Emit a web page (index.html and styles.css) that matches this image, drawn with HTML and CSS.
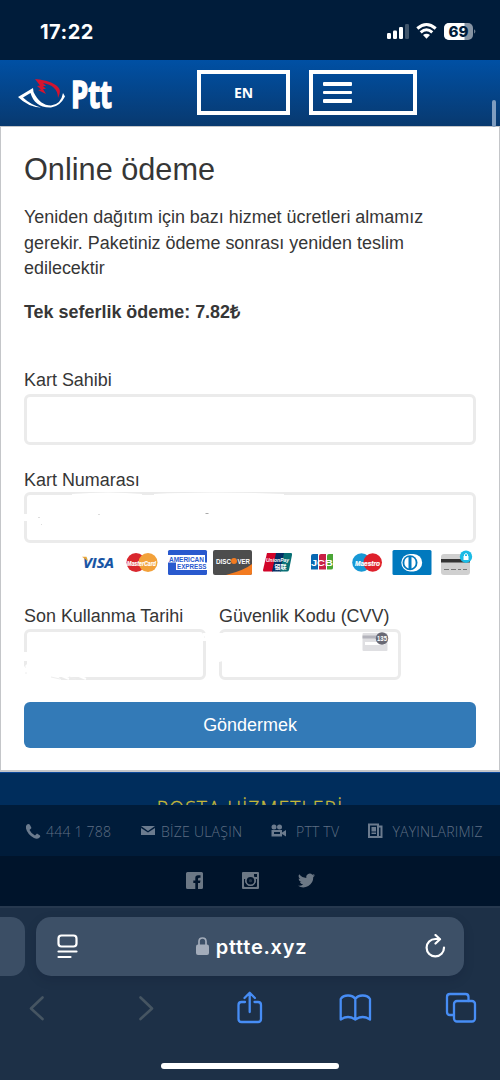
FILE: index.html
```html
<!DOCTYPE html>
<html lang="tr">
<head>
<meta charset="utf-8">
<title>Online ödeme</title>
<link rel="stylesheet" href="styles.css">
</head>
<body>
<div class="phone">
  <div class="status">
    <span class="clock">17:22</span>
    <svg class="status-icons" width="92" height="20" viewBox="0 0 92 20">
      <g fill="#fff"><rect x="0" y="11" width="4" height="6" rx="1.2"/><rect x="6" y="8.500" width="4" height="8.500" rx="1.200"/><rect x="12" y="5" width="4" height="12" rx="1.200"/><rect x="18" y="2" width="4" height="15" rx="1.200" opacity=".25"/></g>
      <g fill="none" stroke="#fff" stroke-width="3"><path d="M30.300 6.500Q39.500-1.500 48.700 6.500"/><path d="M33.700 10.300Q39.500 5.300 45.300 10.300"/></g>
      <path fill="#fff" d="M36 13Q39.500 10.300 43 13L39.500 16.700Z"/>
      <rect x="57" y="1" width="29" height="17" rx="5" fill="#8794a3"/>
      <path d="M62 1h15.500v17H62a5 5 0 0 1-5-5V6a5 5 0 0 1 5-5Z" fill="#fff"/>
      <path d="M87.200 7.300q2.300 2.200 0 4.500Z" fill="#8794a3"/>
      <text x="61.500" y="15" class="battery" textLength="20" lengthAdjust="spacingAndGlyphs">69</text>
    </svg>
  </div>

  <div class="header">
    <svg class="logo" width="98" height="36" viewBox="0 0 98 36">
      <path fill="#fff" d="M0 18 15 9 15.500 13Q22 26.500 33 26.500Q43 25.500 45 14L47 17.500Q42 27.500 33 28.500C22 29 15 23 12.500 14L5 18.500Q13 26 23 28.500Q10 28 0 18Z"/>
      <path fill="#d5142f" d="M17 0C29 1 45 6 41.500 15L40 19C40 10 34 5.500 25 4L28 7 25 7 28 10 25 10 28 15 20 11 23 10.500 19 7 22 6.500Z"/>
      <text x="53" y="29" class="logo-text" textLength="41" lengthAdjust="spacingAndGlyphs">Ptt</text>
    </svg>
    <div class="lang">EN</div>
    <div class="menu"><i></i><i></i><i></i></div>
    <div class="scrollbar"></div>
  </div>

  <div class="main">
    <h1>Online ödeme</h1>
    <p class="intro">Yeniden dağıtım için bazı hizmet ücretleri almamız<br>gerekir. Paketiniz ödeme sonrası yeniden teslim<br>edilecektir</p>
    <p class="price">Tek seferlik ödeme: 7.82₺</p>
    <div class="group">
      <div class="label">Kart Sahibi</div>
      <div class="box"></div>
    </div>
    <div class="group number">
      <div class="label">Kart Numarası</div>
      <div class="box">
        <svg class="smudge" width="300" height="51" viewBox="0 0 300 51"><path fill="#fff" d="M0 22h5v7H0zM48 2Q85-1 118 2V4H48zM130 2Q185-1 260 2V4H130z"/><path stroke="#aaa" d="M181.500 21.500h3"/><path stroke="#ddd" d="M14 25.500h2M74 22.500h2M17 32.500h1"/></svg>
      </div>
    </div>
    <svg class="brands" width="391" height="27" viewBox="0 0 391 27">
      <text x="1" y="19" class="visa" textLength="31" lengthAdjust="spacingAndGlyphs">VISA</text>
      <path fill="#e9a63a" d="M0 7.700h4.500l1.500 4.500z"/>
      <circle cx="54" cy="13.500" r="9.500" fill="#d9272e"/><circle cx="66" cy="13.500" r="9.500" fill="#f2a13a"/>
      <text x="45" y="16.500" class="mc" textLength="29" lengthAdjust="spacingAndGlyphs">MasterCard</text>
      <rect x="86" y="1" width="39" height="25" rx="1.500" fill="#2959ce"/>
      <path fill="#fff" d="M86 6h37v7.500h2v7.500H94v-7.500h-8z"/>
      <text x="87" y="12.500" class="amex" textLength="35" lengthAdjust="spacingAndGlyphs">AMERICAN</text>
      <text x="95" y="20" class="amex" textLength="29.500" lengthAdjust="spacingAndGlyphs">EXPRESS</text>
      <rect x="131" y="1" width="39" height="25" rx="2" fill="#4d4d4d"/><path fill="#f37b20" d="M144 26Q163 21 170 15V24a2 2 0 0 1-2 2Z"/>
      <text x="134" y="14.500" class="disc" textLength="15" lengthAdjust="spacingAndGlyphs">DISC</text><circle cx="152" cy="12" r="3" fill="#f37b20"/><text x="155.500" y="14.500" class="disc" textLength="12.500" lengthAdjust="spacingAndGlyphs">VER</text>
      <path fill="#d10429" d="M185 4h10l-4 18.500h-9q-1 0-1-1.500Z"/><path fill="#022e64" d="M194 4h9l-4 18.500h-9Z"/><path fill="#076f74" d="M202 4h7q1.500 0 1 2l-3 15q-.5 1.500-2 1.500h-7Z"/>
      <text x="184" y="13" class="up" textLength="23" lengthAdjust="spacingAndGlyphs">UnionPay</text><text x="192.500" y="20" class="up-cn" textLength="12" lengthAdjust="spacingAndGlyphs">银联</text>
      <path fill="#0868b2" d="M231 5h5v15.500h-7V7q0-2 2-2Z"/><path fill="#c92046" d="M239 5h5v15.500h-7V7q0-2 2-2Z"/><path fill="#4aa536" d="M247 5h4v14q0 1.500-2 1.500h-4V7q0-2 2-2Z"/>
      <text x="229" y="16.500" class="jcb" textLength="22" lengthAdjust="spacingAndGlyphs">JCB</text>
      <circle cx="279.500" cy="13.500" r="9.300" fill="#1798d5"/><circle cx="290.700" cy="13.500" r="9.300" fill="#de202b"/>
      <text x="273" y="16.500" class="mc" textLength="25" lengthAdjust="spacingAndGlyphs">Maestro</text>
      <rect x="310.500" y="1" width="39" height="25" rx="1.500" fill="#0079be"/><path fill="#fff" d="M328 5h3.500a8.700 8.700 0 0 1 0 17.400H328a8.700 8.700 0 0 1 0-17.400Z"/><circle cx="328" cy="13.700" r="7.500" fill="#0079be"/><path fill="#fff" d="M326.500 8a6 6 0 0 0 0 11.400Zm3 0a6 6 0 0 1 0 11.400Z"/>
      <rect x="359" y="5" width="29" height="21" rx="3" fill="#d0d0d0"/><path fill="#333" d="M359 10h29v3.500h-29z"/><path stroke="#777" d="M362 20.500h5m2 0h5m2 0h3m2 0h4"/>
      <circle cx="384" cy="7.700" r="6.200" fill="#1cbbe5"/><path fill="#fff" d="M381.500 7h5v4h-5z"/><path fill="none" stroke="#fff" d="M382.500 7.500V5.500q1.500-2 3 0v2"/>
    </svg>
    <div class="pair">
      <div class="group expiry">
        <div class="label">Son Kullanma Tarihi</div>
        <div class="box"><svg class="smudge" width="182" height="51" viewBox="0 0 182 51"><path fill="#fff" d="M0 23h5v9H0zM0 38l4-4v17H0zM4 47h30l4 5H4zM179 4h3v8h-3z"/><path fill="none" stroke="#eee" d="M1 38h1M1 44h2M27 48l9 2M45 48l7 2M180 8h1"/><path stroke="#fff" stroke-width="2" d="M38 47l7 3M55 47l7 3"/></svg></div>
      </div>
      <div class="group cvv">
        <div class="label">Güvenlik Kodu (CVV)</div>
        <div class="box">
          <svg class="smudge" width="182" height="51" viewBox="0 0 182 51"><path fill="#fff" d="M0 4h4v28l-4 1z"/><rect x="143.500" y="4" width="25" height="18" rx="1" fill="#dfdfe2"/><path fill="#b3b3bb" d="M143.500 6.500h25v3h-25z"/><path fill="#fff" d="M146 13h20v3h-20z"/><circle cx="163" cy="9.500" r="6.200" fill="#696974"/><text x="158" y="12" class="digits" textLength="10" lengthAdjust="spacingAndGlyphs">135</text></svg>
        </div>
      </div>
    </div>
    <div class="submit">Göndermek</div>
  </div>

  <div class="services"><span>POSTA HİZMETLERİ</span></div>
  <div class="links">
    <svg width="500" height="51" viewBox="0 0 500 51">
      <g fill="#6b7b8e">
        <path d="M27 19.500q2-1 3 .5l1.500 3-2 2q2 4 5.500 5.500l2-2 3 2q1 1-1 2.500-2 1.500-5 0-6.500-3.500-8-9.500-.5-3 1-4Z"/>
        <path d="M141 21h14l-7 5ZM141 23l7 4.500 7-4.500v7h-14Z"/>
        <circle cx="274" cy="22" r="2.500"/><circle cx="279.500" cy="22" r="2.500"/><path fill-rule="evenodd" d="M271.500 25h10.500v2.500l4-2.500v6.500l-4-2.500v2.500h-10.500ZM274 27v2h6v-2Z"/>
        <path fill-rule="evenodd" d="M368 18.500h11v2h3.500v12.500H368ZM370 20.500v10.500h7v-10.500ZM379 22.500v8.500h1.500v-8.500Z"/><path d="M371.500 22h4.500v4.500h-4.500ZM371.500 27.500h4.500v1.500h-4.500Z"/>
      </g>
      <g class="link-text">
        <text x="46" y="32" textLength="65">444 1 788</text>
        <text x="161" y="32" textLength="81">BİZE ULAŞIN</text>
        <text x="296" y="32" textLength="43">PTT TV</text>
        <text x="392.500" y="32" textLength="90">YAYINLARIMIZ</text>
      </g>
    </svg>
  </div>
  <div class="social">
    <svg width="17" height="17" viewBox="0 0 17 17"><path fill="#6c7885" fill-rule="evenodd" d="M1.500 0h14Q17 0 17 1.500v14q0 1.500-1.500 1.500H12v-6h2l.5-2.500H12V7q0-1.300 1.300-1.300h1.200V3.200H12Q9.300 3.200 9.300 6v2.500h-2V11h2v6H1.500Q0 17 0 15.500v-14Q0 0 1.500 0Z"/></svg>
    <svg width="17" height="17" viewBox="0 0 17 17"><path fill="#6c7885" fill-rule="evenodd" d="M1 0h15q1 0 1 1v15q0 1-1 1H1q-1 0-1-1V1q0-1 1-1ZM2 7v7q0 1 1 1h11q1 0 1-1V7h-1.500a5.300 5.300 0 1 1-10 0ZM12 2v3h3V2Z"/><path fill="#6c7885" d="M3.500 7 5 4h7l1.500 3a5.300 5.300 0 1 1-10 0Z"/><circle cx="8.500" cy="8.700" r="3.800" fill="#00142b"/><circle cx="8.500" cy="8.700" r="1.600" fill="#6c7885" opacity=".35"/></svg>
    <svg width="17" height="17" viewBox="0 0 24 24"><path fill="#6c7885" d="M24 4.600a10 10 0 0 1-2.800.8 5 5 0 0 0 2.100-2.700 10 10 0 0 1-3.100 1.200 4.900 4.900 0 0 0-8.400 4.500A14 14 0 0 1 1.700 3.200a4.900 4.900 0 0 0 1.500 6.500A5 5 0 0 1 1 9.100a4.900 4.900 0 0 0 3.900 4.900 5 5 0 0 1-2.200.1 4.900 4.900 0 0 0 4.600 3.400A10 10 0 0 1 0 19.500 14 14 0 0 0 21.500 7.100 10 10 0 0 0 24 4.600Z"/></svg>
  </div>

  <div class="browser">
    <div class="tabs">
      <div class="tab-edge"></div>
      <div class="address">
        <svg width="21" height="25" viewBox="0 0 21 25"><g fill="none" stroke="#fff" stroke-width="2.200" stroke-linecap="round"><rect x="1.500" y="1.500" width="18" height="11" rx="3"/><path d="M1.500 17.500h18M1.500 23h12"/></g></svg>
        <div class="domain"><svg width="13" height="19" viewBox="0 0 13 19"><rect y="7.500" width="13" height="10.500" rx="2" fill="#a3acba"/><path fill="none" stroke="#a3acba" stroke-width="1.700" d="M3 8V4.500Q3 1 6.500 1T10 4.500V8"/></svg><span>pttte.xyz</span></div>
        <svg width="21" height="25" viewBox="0 0 21 25"><path fill="none" stroke="#fff" stroke-width="2.200" stroke-linecap="round" stroke-linejoin="round" d="M19 13.500A8.700 8.700 0 1 1 10.300 5H15M10.500 1 15 5.200 10.500 9.500"/></svg>
      </div>
    </div>
    <svg class="tools" width="500" height="50" viewBox="0 0 500 50">
      <g fill="none" stroke-width="2.600" stroke-linecap="round" stroke-linejoin="round">
        <path stroke="#465562" d="M42.500 11.500 31 22.500l11.500 10.500M140.500 11.500l11.500 11-11.500 10.500"/>
        <g stroke="#478df5" stroke-width="2.300"><path d="M245 16h-3.500q-3 0-3 3v14q0 3 3 3h16.500q3 0 3-3V19q0-3-3-3h-3.500M249.700 26V7M244.500 12l5.200-5.200 5.200 5.200"/>
        <path d="M355.300 13q-2-3.500-7.300-3.500T340.700 13v20.500q7.300-5 14.600 0 7.400-5 14.700 0V13q-2-3.500-7.300-3.500T355.300 13v20.500"/>
        <path d="M453.500 29H450q-3 0-3-3V11q0-3 3-3h15.500q3 0 3 3v4"/><rect x="454" y="15" width="21" height="20.500" rx="3"/></g>
      </g>
    </svg>
    <div class="home"></div>
  </div>
</div>
</body>
</html>
```

FILE: styles.css
```css
* { box-sizing: border-box; }
body { margin: 0; font-family: "Liberation Sans", Arial, sans-serif; }
svg { display: block; flex: none; }
.phone { width: 500px; height: 1080px; overflow: hidden; display: flex; flex-direction: column; background: #1d3047; }
.phone > div { flex: none; }
.status { height: 60px; background: #001c3a; display: flex; justify-content: space-between; padding: 20px 21px 0 40px; }
.clock { font: 700 20px/24px Inter, sans-serif; color: #fff; letter-spacing: .5px; }
.status-icons { margin-top: 2px; }
.battery { font: 800 15px Inter, sans-serif; fill: #001c3a; }
.header { height: 66px; background: linear-gradient(#0050a4, #08396f); display: flex; position: relative; padding: 10px 0 0 18px; }
.logo { margin-top: 9px; }
.logo-text { font: 700 38px "Open Sans", sans-serif; fill: #fff; stroke: #fff; stroke-width: 1.6px; }
.lang, .menu { border: 4px solid #fff; height: 45px; }
.lang { width: 93px; margin-left: 81px; text-align: center; color: #fff; font: 700 14px/38px "Open Sans", sans-serif; }
.menu { width: 108px; margin-left: 19px; padding: 8px 10px; display: flex; flex-direction: column; gap: 5px; }
.menu i { width: 29px; height: 4px; border-radius: 1px; background: #fff; }
.scrollbar { position: absolute; right: 4px; top: 40px; width: 4px; height: 27px; border-radius: 2px; background: #7f9dc0; }
.main { height: 646px; background: #fff; border: 1px solid #c4c6c9; border-bottom-width: 2px; padding: 23px 23px 0; color: #363636; font-size: 17.95px; }
h1 { margin: 0; font-weight: 400; font-size: 30.7px; line-height: 40px; }
.intro { margin: 15px 0 0; line-height: 25.500px; white-space: nowrap; }
.price { margin: 18px 0 0; line-height: 25.500px; font-weight: 700; }
.group { margin-top: 43px; }
.group.number { margin-top: 22px; }
.label { line-height: 25.500px; white-space: nowrap; }
.box { height: 51px; border-radius: 6px; border: 3px solid #ebebeb; }
.smudge { margin: -3px; overflow: visible; }
.brands { margin: 6px 0 0 58px; }
.visa { font: italic 700 15px "Open Sans", sans-serif; fill: #1553a4; stroke: #1553a4; stroke-width: .2px; }
.mc { font: italic 700 7px "Liberation Sans", sans-serif; fill: #fff; stroke: #fff; stroke-width: .2px; }
.amex { font: 700 8px "Liberation Sans", sans-serif; fill: #2959ce; }
.disc { font: 700 7px "Liberation Sans", sans-serif; fill: #fff; }
.up { font: italic 700 6px "Liberation Sans", sans-serif; fill: #fff; }
.up-cn { font: 700 6px "Noto Sans CJK SC", sans-serif; fill: #fff; }
.jcb { font: 700 9px "Liberation Sans", sans-serif; fill: #fff; }
.digits { font: 700 6.500px "Liberation Sans", sans-serif; fill: #fff; }
.pair { display: flex; gap: 13px; margin-top: 27px; }
.pair .group { width: 182px; margin: 0; }
.pair .label, .number .label { position: relative; top: 1px; }
.submit { margin-top: 22px; height: 46px; border-radius: 6px; background: #337ab7; color: #fff; text-align: center; line-height: 47px; }
.services { height: 33px; overflow: hidden; background: #002d5c; border-top: 1px solid #0b489a; color: #c7b838; text-align: center; font: 300 19.300px/28px "Open Sans", sans-serif; letter-spacing: 1.2px; padding-top: 22px; white-space: nowrap; -webkit-text-stroke: .35px #c7b838; }
.links { height: 51px; background: #001c3a; }
.link-text { font: 300 14px "Open Sans", sans-serif; fill: #5f6f84; }
.social { height: 50px; background: #00142b; display: flex; justify-content: center; align-items: center; gap: 39px; padding-bottom: 2px; }
.browser { height: 175px; background: #1d3047; border-top: 2px solid #26384e; }
.tabs { display: flex; gap: 11px; padding-top: 9px; }
.tab-edge { width: 25px; height: 59px; border-radius: 0 14px 14px 0; background: #3b4e65; }
.address { width: 428px; height: 59px; border-radius: 15px; background: #3d5067; display: flex; align-items: center; justify-content: space-between; padding: 0 18px 0 21px; box-shadow: 0 4px 12px rgba(0, 10, 30, .12); }
.domain { display: flex; align-items: center; gap: 7px; color: #fff; font: 600 20px/28px Inter, sans-serif; letter-spacing: .75px; }
.tools { margin-top: 10px; }
.home { width: 178px; height: 6px; border-radius: 3px; background: #fff; margin: 27px 0 0 161px; }
```
